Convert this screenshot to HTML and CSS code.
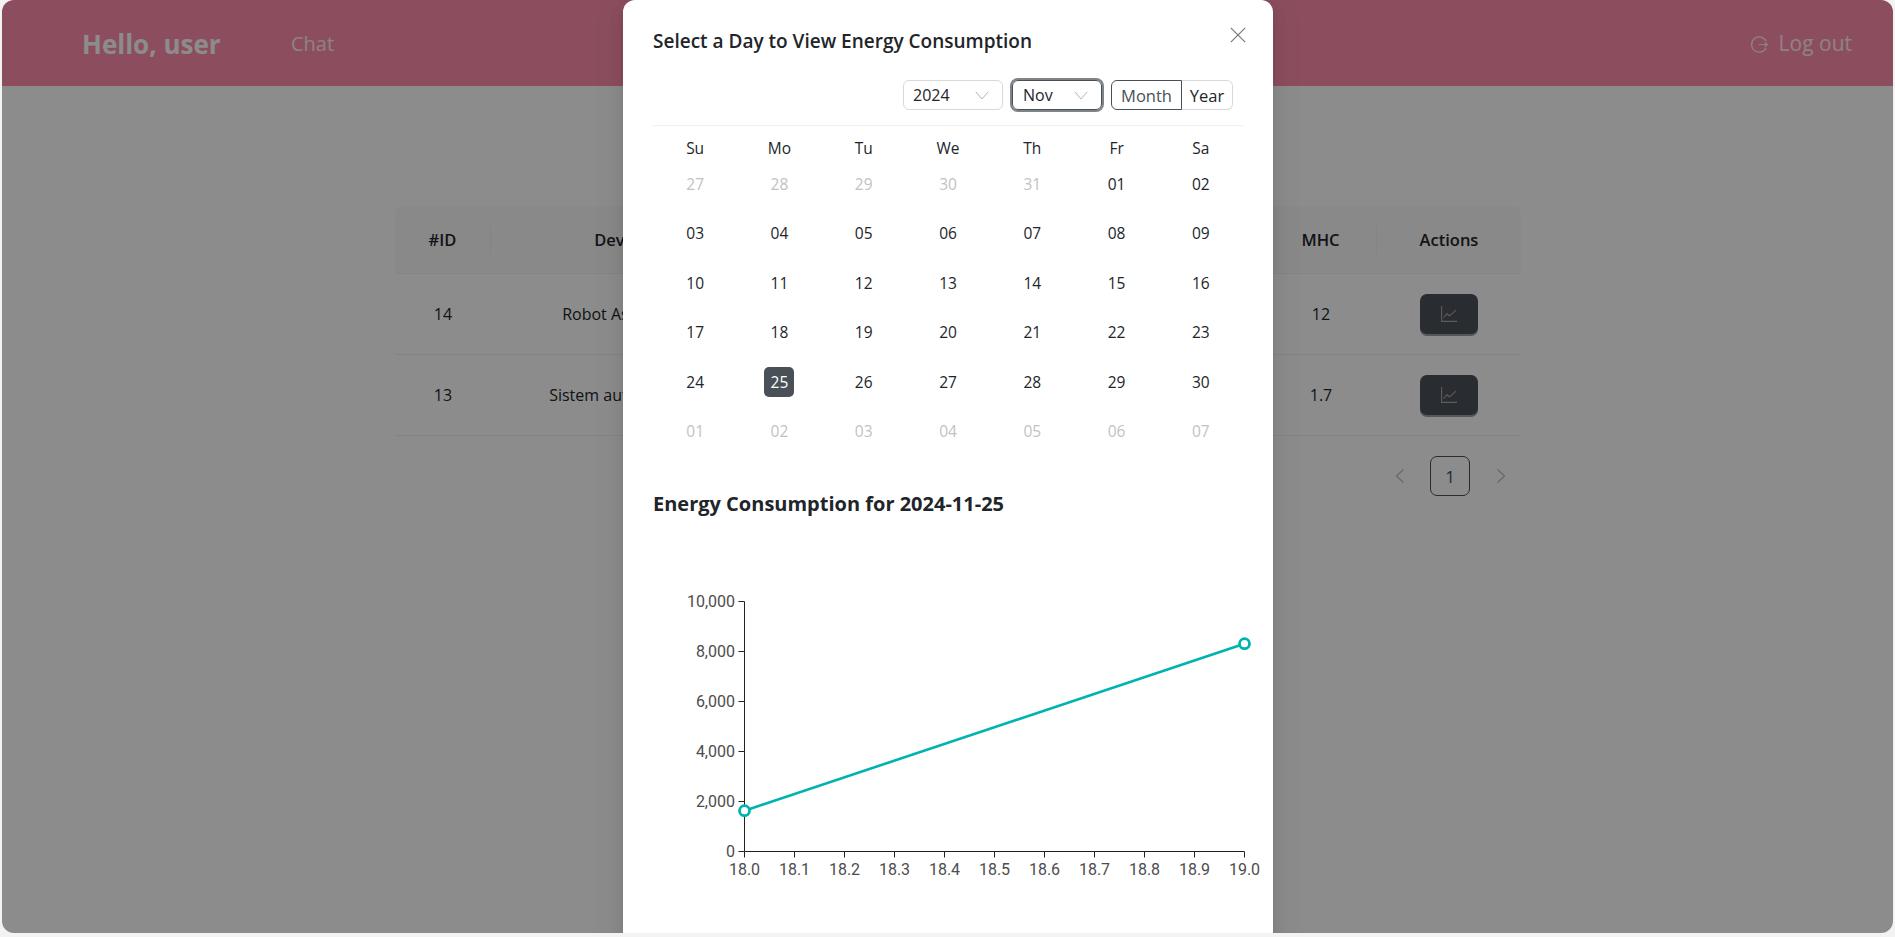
FILE: index.html
```html
<!DOCTYPE html>
<html lang="en">
<head>
<meta charset="utf-8">
<title>Energy Consumption</title>
<link rel="stylesheet" href="styles.css">
</head>
<body>
<div class="frame">
  <header class="topbar">
    <div class="brand">Hello, user</div>
    <nav class="nav"><a class="nav-link">Chat</a></nav>
    <a class="logout">
      <svg class="logout-icon" viewBox="0 0 16 16" fill="none" stroke="currentColor" stroke-width="1.1"><path d="M14.3 5A7.2 7.2 0 1 0 14.3 11"/><path d="M7.5 8H15.4M13 5.9 15.4 8 13 10.1"/></svg>
      <span>Log out</span>
    </a>
  </header>
  <main class="content">
    <table class="table">
      <colgroup><col class="c-id"><col class="c-device"><col class="c-power"><col class="c-mhc"><col class="c-actions"></colgroup>
      <thead>
        <tr><th><span class="th-in">#ID</span></th><th><span class="th-in">Device</span></th><th><span class="th-in"></span></th><th><span class="th-in">MHC</span></th><th>Actions</th></tr>
      </thead>
      <tbody>
        <tr><td>14</td><td>Robot Aspirator</td><td></td><td>12</td><td><button class="act"><svg viewBox="0 0 16 16" class="act-icon" fill="none" stroke="currentColor" stroke-width="1.1"><path d="M.6 0v15.4H16"/><path d="M2.6 11.5 6 7.8l2.6 2L15 4.2"/></svg></button></td></tr>
        <tr><td>13</td><td>Sistem automatizat</td><td></td><td>1.7</td><td><button class="act"><svg viewBox="0 0 16 16" class="act-icon" fill="none" stroke="currentColor" stroke-width="1.1"><path d="M.6 0v15.4H16"/><path d="M2.6 11.5 6 7.8l2.6 2L15 4.2"/></svg></button></td></tr>
      </tbody>
    </table>
    <div class="pager">
      <span class="page-nav"><svg viewBox="0 0 10 16" class="chev" fill="none" stroke="currentColor" stroke-width="1.2"><path d="M8.5 1.5 1.5 8l7 6.5"/></svg></span>
      <span class="page-num">1</span>
      <span class="page-nav"><svg viewBox="0 0 10 16" class="chev" fill="none" stroke="currentColor" stroke-width="1.2"><path d="M1.5 1.5 8.5 8l-7 6.5"/></svg></span>
    </div>
  </main>
  <div class="overlay"></div>
  <section class="modal">
    <svg class="close" viewBox="0 0 16 16" fill="none" stroke="currentColor" stroke-width="1.2"><path d="M.8.8l14.4 14.4M15.2.8.8 15.2"/></svg>
    <h2 class="modal-title">Select a Day to View Energy Consumption</h2>
    <div class="toolbar">
      <div class="select"><span>2024</span><svg class="sel-chev" viewBox="0 0 14 9" fill="none" stroke="currentColor"><path d="M.8.8 7 8 13.2.8"/></svg></div>
      <div class="select select-focus"><span>Nov</span><svg class="sel-chev" viewBox="0 0 14 9" fill="none" stroke="currentColor"><path d="M.8.8 7 8 13.2.8"/></svg></div>
      <div class="segment"><span class="seg seg-on">Month</span><span class="seg seg-off">Year</span></div>
    </div>
    <div class="calendar">
      <div class="wd">Su</div><div class="wd">Mo</div><div class="wd">Tu</div><div class="wd">We</div><div class="wd">Th</div><div class="wd">Fr</div><div class="wd">Sa</div>
      <div class="day out">27</div><div class="day out">28</div><div class="day out">29</div><div class="day out">30</div><div class="day out">31</div><div class="day">01</div><div class="day">02</div>
      <div class="day">03</div><div class="day">04</div><div class="day">05</div><div class="day">06</div><div class="day">07</div><div class="day">08</div><div class="day">09</div>
      <div class="day">10</div><div class="day">11</div><div class="day">12</div><div class="day">13</div><div class="day">14</div><div class="day">15</div><div class="day">16</div>
      <div class="day">17</div><div class="day">18</div><div class="day">19</div><div class="day">20</div><div class="day">21</div><div class="day">22</div><div class="day">23</div>
      <div class="day">24</div><div class="day"><span class="sel">25</span></div><div class="day">26</div><div class="day">27</div><div class="day">28</div><div class="day">29</div><div class="day">30</div>
      <div class="day out">01</div><div class="day out">02</div><div class="day out">03</div><div class="day out">04</div><div class="day out">05</div><div class="day out">06</div><div class="day out">07</div>
    </div>
    <h3 class="chart-title">Energy Consumption for 2024-11-25</h3>
    <svg class="chart" viewBox="0 0 620 370" width="620" height="370">
      <g class="axis">
        <path d="M91.5 51.5V301.5H591.5"/>
        <path d="M85.5 51.5h6M85.5 101.5h6M85.5 151.5h6M85.5 201.5h6M85.5 251.5h6M85.5 301.5h6"/>
        <path d="M91.5 301.5v6M141.5 301.5v6M191.5 301.5v6M241.5 301.5v6M291.5 301.5v6M341.5 301.5v6M391.5 301.5v6M441.5 301.5v6M491.5 301.5v6M541.5 301.5v6M591.5 301.5v6"/>
      </g>
      <g class="ylabels">
        <text x="82" y="57">10,000</text><text x="82" y="107">8,000</text><text x="82" y="157">6,000</text><text x="82" y="207">4,000</text><text x="82" y="257">2,000</text><text x="82" y="307">0</text>
      </g>
      <g class="xlabels">
        <text x="91.5" y="325">18.0</text><text x="141.5" y="325">18.1</text><text x="191.5" y="325">18.2</text><text x="241.5" y="325">18.3</text><text x="291.5" y="325">18.4</text><text x="341.5" y="325">18.5</text><text x="391.5" y="325">18.6</text><text x="441.5" y="325">18.7</text><text x="491.5" y="325">18.8</text><text x="541.5" y="325">18.9</text><text x="591.5" y="325">19.0</text>
      </g>
      <path class="line" d="M91.5 260.7 591.5 93.7"/>
      <circle class="dot" cx="91.5" cy="260.7" r="5"/>
      <circle class="dot" cx="591.5" cy="93.7" r="5"/>
    </svg>
  </section>
</div>
</body>
</html>
```
FILE: styles.css
```css
* { box-sizing: border-box; }
html, body { margin: 0; height: 100%; overflow: hidden; }
body {
  background: #f3f3f3;
  font-family: "Open Sans", "Noto Sans", "Liberation Sans", sans-serif;
  color: #212529;
  padding: 0 2px 4px;
}
.frame {
  position: relative;
  height: 933px;
  background: #fff;
  border-radius: 12px;
  overflow: hidden;
}
.topbar {
  height: 86px;
  background: #ff8fab;
  display: flex;
  align-items: center;
  padding: 0 41px 0 80px;
  color: #fff;
}
.brand { width: 209px; padding-top: 2px; font-size: 26px; font-weight: 700; }
.nav { flex: 1; }
.nav-link { font-size: 20px; opacity: .85; }
.logout { display: flex; align-items: center; gap: 11px; font-size: 21px; opacity: .85; }
.logout-icon { width: 17px; height: 17px; margin-top: 2px; }

.content { margin-left: 393px; width: 1126px; padding-top: 120px; }
.table { width: 100%; border-collapse: separate; border-spacing: 0; table-layout: fixed; font-size: 16px; }
.c-id { width: 96px; }
.c-device { width: 260px; }
.c-power { width: 514px; }
.c-mhc { width: 112px; }
.c-actions { width: 144px; }
.table th {
  height: 68px;
  background: #fafafa;
  border-bottom: 1px solid #f0f0f0;
  font-size: 16.5px;
  font-weight: 600;
  text-align: center;
  padding: 0;
}
.table th:first-child { border-top-left-radius: 8px; }
.table th:last-child { border-top-right-radius: 8px; }
.th-in { display: flex; align-items: center; justify-content: center; height: 28px; border-right: 1px solid #f0f0f0; }
.table td { height: 81px; border-bottom: 1px solid #f0f0f0; text-align: center; padding: 0; }
.act {
  width: 58px;
  height: 40px;
  border: 0;
  border-radius: 7px;
  background: #4c5159;
  color: #a8a8a8;
  box-shadow: 0 2px 0 #9a9da0;
  padding: 0;
  display: inline-flex;
  align-items: center;
  justify-content: center;
  vertical-align: middle;
}
.act-icon { width: 16px; height: 16px; }
.pager { display: flex; justify-content: flex-end; gap: 10px; margin-top: 20px; }
.page-nav { width: 41px; height: 40px; display: flex; align-items: center; justify-content: center; color: #bbb; }
.chev { width: 10px; height: 16px; }
.page-num {
  width: 40px;
  height: 40px;
  border: 1px solid #495057;
  border-radius: 7px;
  display: flex;
  align-items: center;
  justify-content: center;
  font-size: 17px;
  font-weight: 500;
  color: #33526f;
}
.overlay { position: absolute; inset: 0; background: rgba(0, 0, 0, .45); }

.modal {
  position: absolute;
  left: 621px;
  top: 0;
  width: 650px;
  min-height: 1000px;
  background: #fff;
  border-radius: 12px;
  padding: 0 30px;
  box-shadow: 0 6px 16px rgba(0, 0, 0, .08), 0 3px 6px -4px rgba(0, 0, 0, .12), 0 9px 28px 8px rgba(0, 0, 0, .05);
}
.close { position: absolute; right: 27px; top: 27px; width: 16px; height: 16px; color: #777; }
.modal-title { margin: 0; padding-top: 29px; line-height: 24px; font-size: 19px; font-weight: 600; color: #212529; }
.toolbar { display: flex; justify-content: flex-end; align-items: center; padding: 27px 10px 15.5px 0; height: 72.5px; border-bottom: 1px solid #f0f0f0; gap: 9px; }
.select {
  width: 100px;
  height: 30px;
  border: 1px solid #d9d9d9;
  border-radius: 6px;
  display: flex;
  align-items: center;
  justify-content: space-between;
  padding: 1px 13px 0 9px;
  font-size: 16px;
}
.select-focus { width: 90px; padding-left: 10px; border-color: #495057; box-shadow: 0 0 0 2px rgba(73, 80, 87, .7); }
.sel-chev { width: 14px; height: 9px; color: #b4b4b4; }
.segment { display: flex; height: 30px; font-size: 16.5px; }
.seg { display: flex; align-items: center; justify-content: center; padding-top: 1px; }
.seg-on { width: 71px; border: 1px solid #495057; border-radius: 6px 0 0 6px; color: #495057; }
.seg-off { width: 51px; border: 1px solid #d9d9d9; border-left: 0; border-radius: 0 6px 6px 0; }
.calendar { display: grid; grid-template-columns: repeat(7, 1fr); grid-auto-rows: 49.6px; grid-template-rows: 43px; font-size: 15.5px; }
.wd { display: flex; align-items: center; justify-content: center; padding-top: 2px; }
.day { display: flex; justify-content: center; line-height: 30px; height: 30px; }
.out { color: #c2c2c2; }
.sel { width: 30px; height: 30px; border-radius: 5px; background: #495057; color: #fff; text-align: center; }
.chart-title { margin: 26px 0 0; line-height: 24px; font-size: 20px; font-weight: 700; color: #212529; }
.chart { display: block; margin-top: 34px; overflow: visible; }
.chart text { font-family: Roboto, sans-serif; font-size: 16px; fill: #4d4d4d; }
.axis path { fill: none; stroke: #222; stroke-width: 1; }
.ylabels text { text-anchor: end; }
.xlabels text { text-anchor: middle; }
.line { fill: none; stroke: #00b4ad; stroke-width: 2.6; }
.dot { fill: #fff; stroke: #00b4ad; stroke-width: 2.8; }
```
